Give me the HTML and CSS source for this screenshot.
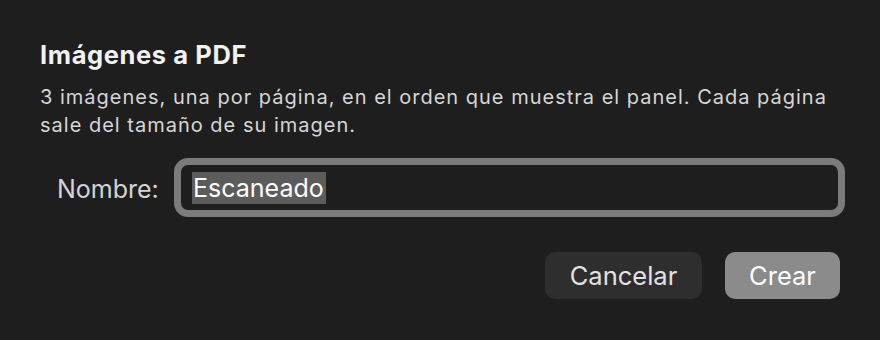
FILE: index.html
```html
<!DOCTYPE html>
<html lang="es">
<head>
<meta charset="utf-8">
<title>Imágenes a PDF</title>
<link rel="stylesheet" href="styles.css">
</head>
<body>
<div class="dialog">
  <h1 class="title">Imágenes a PDF</h1>
  <p class="desc">3 imágenes, una por página, en el orden que muestra el panel. Cada página sale del tamaño de su imagen.</p>
  <div class="row">
    <label class="label">Nombre:</label>
    <div class="field"><span class="sel">Escaneado</span></div>
  </div>
  <div class="actions">
    <button class="btn cancel">Cancelar</button>
    <button class="btn primary">Crear</button>
  </div>
</div>
</body>
</html>
```
FILE: styles.css
```css
html, body {
  margin: 0;
  padding: 0;
  background: #1e1e1e;
}
body {
  width: 880px;
  height: 340px;
  overflow: hidden;
  font-family: Inter, "Noto Sans", "Liberation Sans", sans-serif;
}
.dialog {
  padding: 40px 35px 0 40px;
  display: flex;
  flex-direction: column;
}
.title {
  margin: 0;
  font-size: 25.5px;
  line-height: 30px;
  font-weight: 700;
  letter-spacing: 0.6px;
  color: #f2f2f2;
}
.desc {
  margin: 13px 0 0 0;
  font-size: 20px;
  line-height: 28px;
  letter-spacing: 1px;
  color: #d6d6d6;
  width: 810px;
}
.row {
  margin-top: 19px;
  display: flex;
  align-items: center;
  padding-left: 17px;
}
.label {
  font-size: 25px;
  line-height: 62px;
  height: 59px;
  color: #d4d4d4;
  width: 101px;
  margin-right: 16px;
  white-space: nowrap;
}
.field {
  box-sizing: border-box;
  width: 671px;
  height: 59px;
  border: 7px solid #7b7b7b;
  border-radius: 14px;
  background: #1e1e1e;
  display: flex;
  align-items: center;
  padding-left: 11px;
}
.sel {
  background: #5c5c5c;
  color: #ffffff;
  font-size: 25px;
  line-height: 32px;
  padding: 0 2px 0 1px;
}
.actions {
  margin-top: 35px;
  display: flex;
  justify-content: flex-end;
  gap: 23px;
  padding-right: 5px;
}
.btn {
  font-family: inherit;
  font-size: 25.5px;
  height: 47px;
  border: none;
  border-radius: 10px;
  padding: 0;
}
.cancel {
  width: 157px;
  background: #2e2e2e;
  color: #e2e2e2;
}
.primary {
  width: 115px;
  background: #8b8b8b;
  color: #ffffff;
}
```
